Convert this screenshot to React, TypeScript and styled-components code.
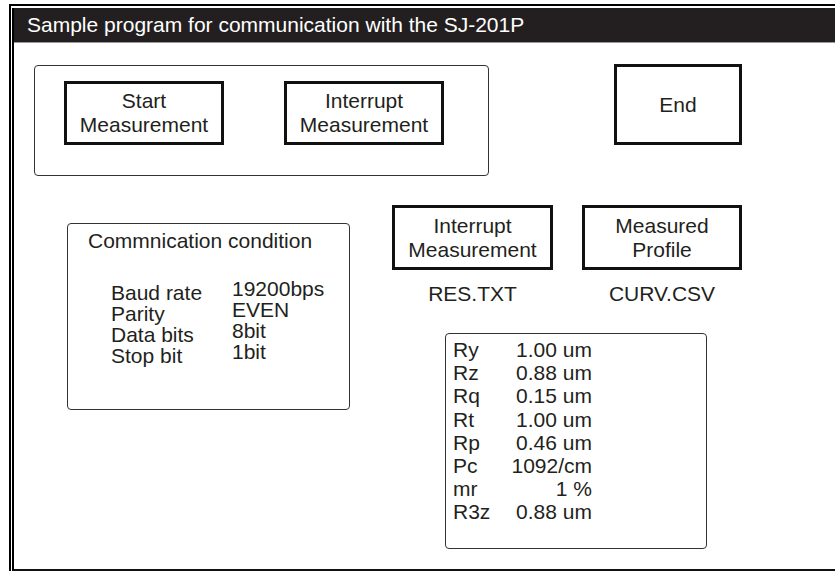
import styled, { createGlobalStyle } from "styled-components";

const results: [string, string][] = [
  ["Ry", "1.00 um"],
  ["Rz", "0.88 um"],
  ["Rq", "0.15 um"],
  ["Rt", "1.00 um"],
  ["Rp", "0.46 um"],
  ["Pc", "1092/cm"],
  ["mr", "1 %"],
  ["R3z", "0.88 um"],
];

const conditions: [string, string][] = [
  ["Baud rate", "19200bps"],
  ["Parity", "EVEN"],
  ["Data bits", "8bit"],
  ["Stop bit", "1bit"],
];

export default function App() {
  return (
    <>
      <GlobalStyle />
      <Frame>
        <Inner>
          <TitleBar>Sample program for communication with the SJ-201P</TitleBar>
          <Content>
            <TopRow>
              <GroupBox>
                <Button $w={160} $h={64}>
                  Start
                  <br />
                  Measurement
                </Button>
                <Button $w={160} $h={64}>
                  Interrupt
                  <br />
                  Measurement
                </Button>
              </GroupBox>
              <Button $w={128} $h={81}>End</Button>
            </TopRow>

            <BottomRow>
              <CommBox>
                <CommTitle>Commnication condition</CommTitle>
                <CondTable>
                  <LabelCol>
                    {conditions.map(([k]) => (
                      <div key={k}>{k}</div>
                    ))}
                  </LabelCol>
                  <ValueCol>
                    {conditions.map(([k, v]) => (
                      <div key={k}>{v}</div>
                    ))}
                  </ValueCol>
                </CondTable>
              </CommBox>

              <RightCol>
                <ButtonRow>
                  <Button $w={161} $h={65}>
                    Interrupt
                    <br />
                    Measurement
                  </Button>
                  <Button $w={160} $h={65}>
                    Measured
                    <br />
                    Profile
                  </Button>
                </ButtonRow>
                <ButtonRow $top={12}>
                  <FileName $w={161}>RES.TXT</FileName>
                  <FileName $w={160}>CURV.CSV</FileName>
                </ButtonRow>
                <ResultBox>
                  <ResultGrid>
                    {results.map(([k, v]) => (
                      <Row key={k}>
                        <span>{k}</span>
                        <Value>{v}</Value>
                      </Row>
                    ))}
                  </ResultGrid>
                </ResultBox>
              </RightCol>
            </BottomRow>
          </Content>
        </Inner>
      </Frame>
    </>
  );
}

const GlobalStyle = createGlobalStyle`
  html, body {
    margin: 0;
    padding: 0;
    background: #ffffff;
    overflow: hidden;
  }
  body {
    font-family: "Liberation Sans", Arial, Helvetica, sans-serif;
    color: #231f20;
  }
`;

const Frame = styled.div`
  margin: 4px 0 0 9px;
  width: 840px;
  border-top: 2px solid #000000;
  border-left: 2px solid #000000;
  padding: 2px 0 0 1px;
`;

const Inner = styled.div`
  border-left: 2px solid #000000;
  border-bottom: 2px solid #111111;
  display: flex;
  flex-direction: column;
`;

const TitleBar = styled.div`
  height: 34px;
  line-height: 34px;
  padding-left: 13px;
  background: #231f20;
  color: #ffffff;
  font-size: 21px;
  border-bottom: 1px solid #9a9a9a;
  white-space: nowrap;
`;

const Content = styled.div`
  height: 526px;
  box-sizing: border-box;
  padding: 21px 0 0 20px;
  display: flex;
  flex-direction: column;
`;

const TopRow = styled.div`
  display: flex;
  align-items: flex-start;
  gap: 125px;
`;

const GroupBox = styled.div`
  margin-top: 1px;
  display: flex;
  gap: 60px;
  padding: 15px 44px 30px 29px;
  border: 1px solid #333333;
  border-radius: 4px;
`;

const Button = styled.div<{ $w: number; $h: number }>`
  width: ${(p) => p.$w}px;
  height: ${(p) => p.$h}px;
  box-sizing: border-box;
  border: 3px solid #111111;
  background: #ffffff;
  display: flex;
  align-items: center;
  justify-content: center;
  text-align: center;
  font-size: 21px;
  line-height: 24px;
`;

const BottomRow = styled.div`
  margin-top: 29px;
  display: flex;
  align-items: flex-start;
`;

const CommBox = styled.div`
  margin: 18px 0 0 33px;
  width: 283px;
  height: 187px;
  box-sizing: border-box;
  padding: 5px 0 0 20px;
  border: 1px solid #333333;
  border-radius: 4px;
  font-size: 21px;
`;

const CommTitle = styled.div`
  line-height: 24px;
`;

const CondTable = styled.div`
  display: flex;
  margin-top: 25px;
  padding-left: 23px;
  line-height: 21px;
`;

const LabelCol = styled.div`
  width: 121px;
  padding-top: 4px;
`;

const ValueCol = styled.div``;

const RightCol = styled.div`
  margin-left: 42px;
  display: flex;
  flex-direction: column;
`;

const ButtonRow = styled.div<{ $top?: number }>`
  display: flex;
  gap: 29px;
  margin-top: ${(p) => p.$top ?? 0}px;
`;

const FileName = styled.div<{ $w: number }>`
  width: ${(p) => p.$w}px;
  text-align: center;
  font-size: 21px;
  line-height: 24px;
`;

const ResultBox = styled.div`
  margin: 27px 0 0 53px;
  width: 262px;
  height: 216px;
  box-sizing: border-box;
  padding: 4px 0 0 7px;
  border: 1px solid #333333;
  border-radius: 4px;
`;

const ResultGrid = styled.div`
  display: flex;
  flex-direction: column;
  width: 139px;
  font-size: 21px;
  line-height: 23.2px;
`;

const Row = styled.div`
  display: flex;
  justify-content: space-between;
`;

const Value = styled.span`
  text-align: right;
`;
